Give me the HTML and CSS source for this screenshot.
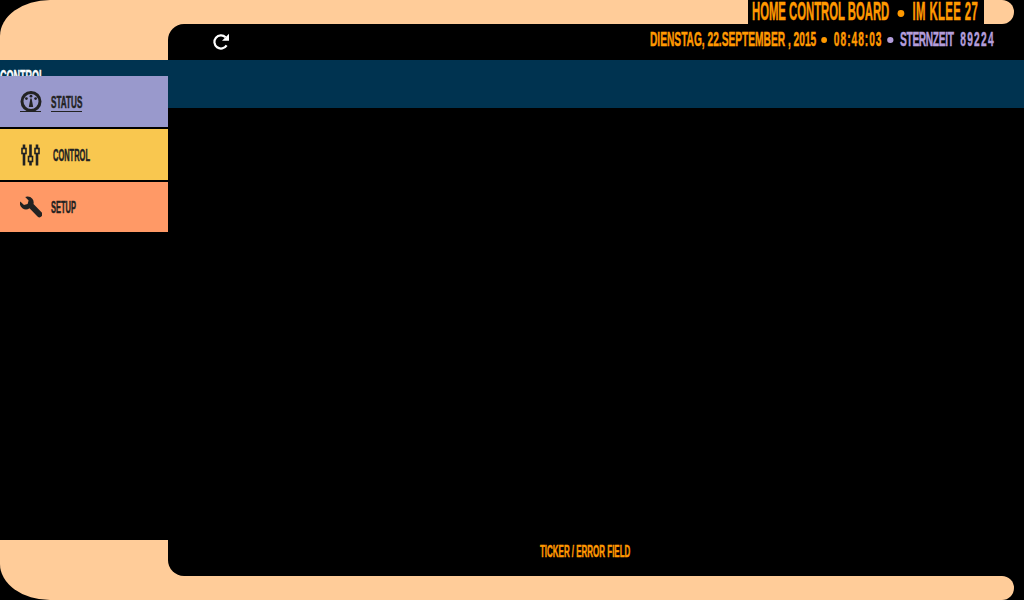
FILE: index.html
```html
<!DOCTYPE html>
<html lang="de">
<head>
  <meta charset="UTF-8">
  <meta name="viewport" content="width=device-width, initial-scale=1.0">
  <title>Home Control Board</title>
  <link rel="stylesheet" href="styles.css">
</head>
<body>

<div class="board">
  <div class="sidebar">
    <div class="elbow-top"></div>
    <div class="side-label"><span class="squeeze">CONTROL</span></div>
    <nav class="nav">
      <a class="nav-item nav-status" href="#">
        <svg class="nav-icon" viewBox="0 0 22 22">
          <circle cx="11" cy="10.5" r="9" fill="none" stroke="#222" stroke-width="3"/>
          <circle cx="11" cy="5.2" r="1.4" fill="#222"/>
          <circle cx="6.4" cy="7.6" r="1.4" fill="#222"/>
          <circle cx="15.6" cy="7.6" r="1.4" fill="#222"/>
          <path d="M10.4 7.5h1.2l1.6 8.5h-4.4z" fill="#222"/>
        </svg>
        <span class="nav-text"><span class="squeeze">STATUS</span></span>
      </a>
      <a class="nav-item nav-control" href="#">
        <svg class="nav-icon nav-icon-tall" viewBox="0 0 22 24">
          <path d="M4 1.5v21M10.5 1.5v21M17 1.5v21" stroke="#222" stroke-width="2.6"/>
          <rect x="2" y="5.5" width="4" height="5" fill="#f9c74f" stroke="#222" stroke-width="1.6"/>
          <rect x="8.5" y="13.5" width="4" height="5" fill="#f9c74f" stroke="#222" stroke-width="1.6"/>
          <rect x="15" y="5.5" width="4" height="5" fill="#f9c74f" stroke="#222" stroke-width="1.6"/>
        </svg>
        <span class="nav-text"><span class="squeeze">CONTROL</span></span>
      </a>
      <a class="nav-item nav-setup" href="#">
        <svg class="nav-icon" viewBox="0 0 22 22">
          <path d="M7.5 0.6a6 6 0 0 1 6 7.4l8 8.2a2.4 2.4 0 0 1-4 4.2l-8-8.2A6 6 0 0 1 .3 5.4L4 9l3.6-1L8.6 4.4 5.2 1a6 6 0 0 1 2.3-.4z" fill="#222"/>
        </svg>
        <span class="nav-text"><span class="squeeze">SETUP</span></span>
      </a>
    </nav>
    <div class="side-spacer"></div>
    <div class="elbow-bottom"></div>
  </div>

  <div class="main">
    <div class="top-bar">
      <div class="top-fill"></div>
      <div class="title"><span class="squeeze">HOME CONTROL BOARD<i class="dot"></i><span class="title-place">IM KLEE 27</span></span></div>
      <div class="top-cap"></div>
    </div>
    <div class="corner-top">
      <div class="clock-row">
        <svg class="refresh" viewBox="0 0 18 18">
          <path d="M14.6 12.4A6.6 6.6 0 1 1 13.6 4.2" fill="none" stroke="#fff" stroke-width="2.2"/>
          <path d="M17 .8v7h-7z" fill="#fff"/>
        </svg>
        <div class="clock"><span class="squeeze">DIENSTAG, 22.SEPTEMBER , 2015<i class="dot"></i><span class="time">08:48:03</span><span class="star"><i class="dot"></i><span class="star-label">STERNZEIT</span><span class="star-num">89224</span></span></span></div>
      </div>
    </div>
    <div class="band"></div>
    <div class="content"></div>
    <div class="corner-bottom">
      <div class="ticker"><span class="squeeze">TICKER / ERROR FIELD</span></div>
    </div>
    <div class="bottom-bar"></div>
  </div>
</div>

</body>
</html>
```

FILE: styles.css
```css
body {
  margin: 0;
  background: #000;
  font-family: "Liberation Sans", sans-serif;
  font-weight: bold;
  overflow: hidden;
}

.board {
  display: flex;
  width: 1024px;
  height: 600px;
}

.squeeze {
  display: inline-block;
  white-space: nowrap;
  transform-origin: left center;
  -webkit-text-stroke: 0.5px currentColor;
}

.dot {
  display: inline-block;
  vertical-align: middle;
  background: currentColor;
  border-radius: 50%;
}

.sidebar {
  display: flex;
  flex-direction: column;
  width: 168px;
}

.elbow-top {
  height: 60px;
  background: #ffcc99;
  border-top-left-radius: 50px 36px;
}

.side-label {
  height: 16px;
  background: #003350;
  color: #fff;
  font-size: 18px;
  line-height: 35px;
  overflow: hidden;
}

.side-label .squeeze {
  transform: scaleX(0.5);
}

.nav {
  display: flex;
  flex-direction: column;
  gap: 2px;
}

.nav-item {
  display: flex;
  align-items: center;
  height: 51px;
  padding-left: 20px;
  color: #222;
  text-decoration: none;
  font-size: 16px;
}

.nav-setup {
  height: 50px;
}

.nav-status { background: #9999cc; }
.nav-control { background: #f9c74f; }
.nav-setup { background: #ff9966; }

.nav-icon {
  width: 22px;
  height: 22px;
  flex: none;
}

.nav-icon-tall {
  height: 24px;
}

.nav-text {
  display: block;
  width: 32px;
  margin-left: 9px;
  padding-top: 2px;
}

.nav-text .squeeze {
  transform: scaleX(0.467);
}

.nav-status .nav-text .squeeze {
  transform: scaleX(0.51);
}

.nav-control .nav-text {
  margin-left: 11px;
}

.nav-status {
  position: relative;
}

.nav-status::after {
  content: "";
  position: absolute;
  left: 20px;
  top: 35px;
  width: 62px;
  height: 1px;
  background: linear-gradient(to right, #222 21px, transparent 21px, transparent 31px, #222 31px);
}

.side-spacer {
  flex: 1;
}

.elbow-bottom {
  height: 60px;
  background: #ffcc99;
  border-bottom-left-radius: 50px 36px;
}

.main {
  display: flex;
  flex-direction: column;
  flex: 1;
}

.top-bar {
  display: flex;
  height: 24px;
  margin-right: 10px;
}

.top-fill {
  flex: 1;
  background: #ffcc99;
}

.title {
  width: 236px;
  height: 24px;
  padding-left: 4px;
  box-sizing: border-box;
  background: #000;
  color: #ff9900;
  font-size: 25px;
  line-height: 23px;
  overflow: hidden;
}

.title .squeeze {
  transform: scaleX(0.452);
}

.title .dot {
  width: 15.5px;
  height: 7px;
  margin: 0 18px;
}

.title-place {
  letter-spacing: 0.9px;
}

.top-cap {
  width: 30px;
  background: #ffcc99;
  border-radius: 0 14px 14px 0;
}

.corner-top {
  background: #ffcc99;
}

.clock-row {
  display: flex;
  justify-content: space-between;
  height: 36px;
  background: #000;
  border-top-left-radius: 16px;
}

.refresh {
  width: 18px;
  height: 18px;
  margin: 9px 0 0 44px;
}

.clock {
  width: 374px;
  color: #ff9900;
  font-size: 21px;
  line-height: 30px;
  overflow: hidden;
}

.clock .squeeze {
  transform: scaleX(0.485);
}

.clock .dot {
  width: 12.4px;
  height: 6px;
  margin: 0 14px 0 10px;
}

.time {
  letter-spacing: 2px;
}

.star {
  color: #b39ddb;
}

.star-label {
  letter-spacing: -0.7px;
}

.star-num {
  margin-left: 14px;
  letter-spacing: 2.5px;
}

.band {
  height: 48px;
  background: #003350;
}

.content {
  flex: 1;
}

.corner-bottom {
  background: #ffcc99;
}

.ticker {
  height: 36px;
  background: #000;
  border-bottom-left-radius: 16px;
  padding-left: 372px;
  box-sizing: border-box;
  color: #ff9900;
  font-size: 16px;
  line-height: 23px;
}

.ticker .squeeze {
  transform: scaleX(0.498);
}

.bottom-bar {
  height: 24px;
  margin-right: 10px;
  background: #ffcc99;
  border-radius: 0 14px 14px 0;
}
```
